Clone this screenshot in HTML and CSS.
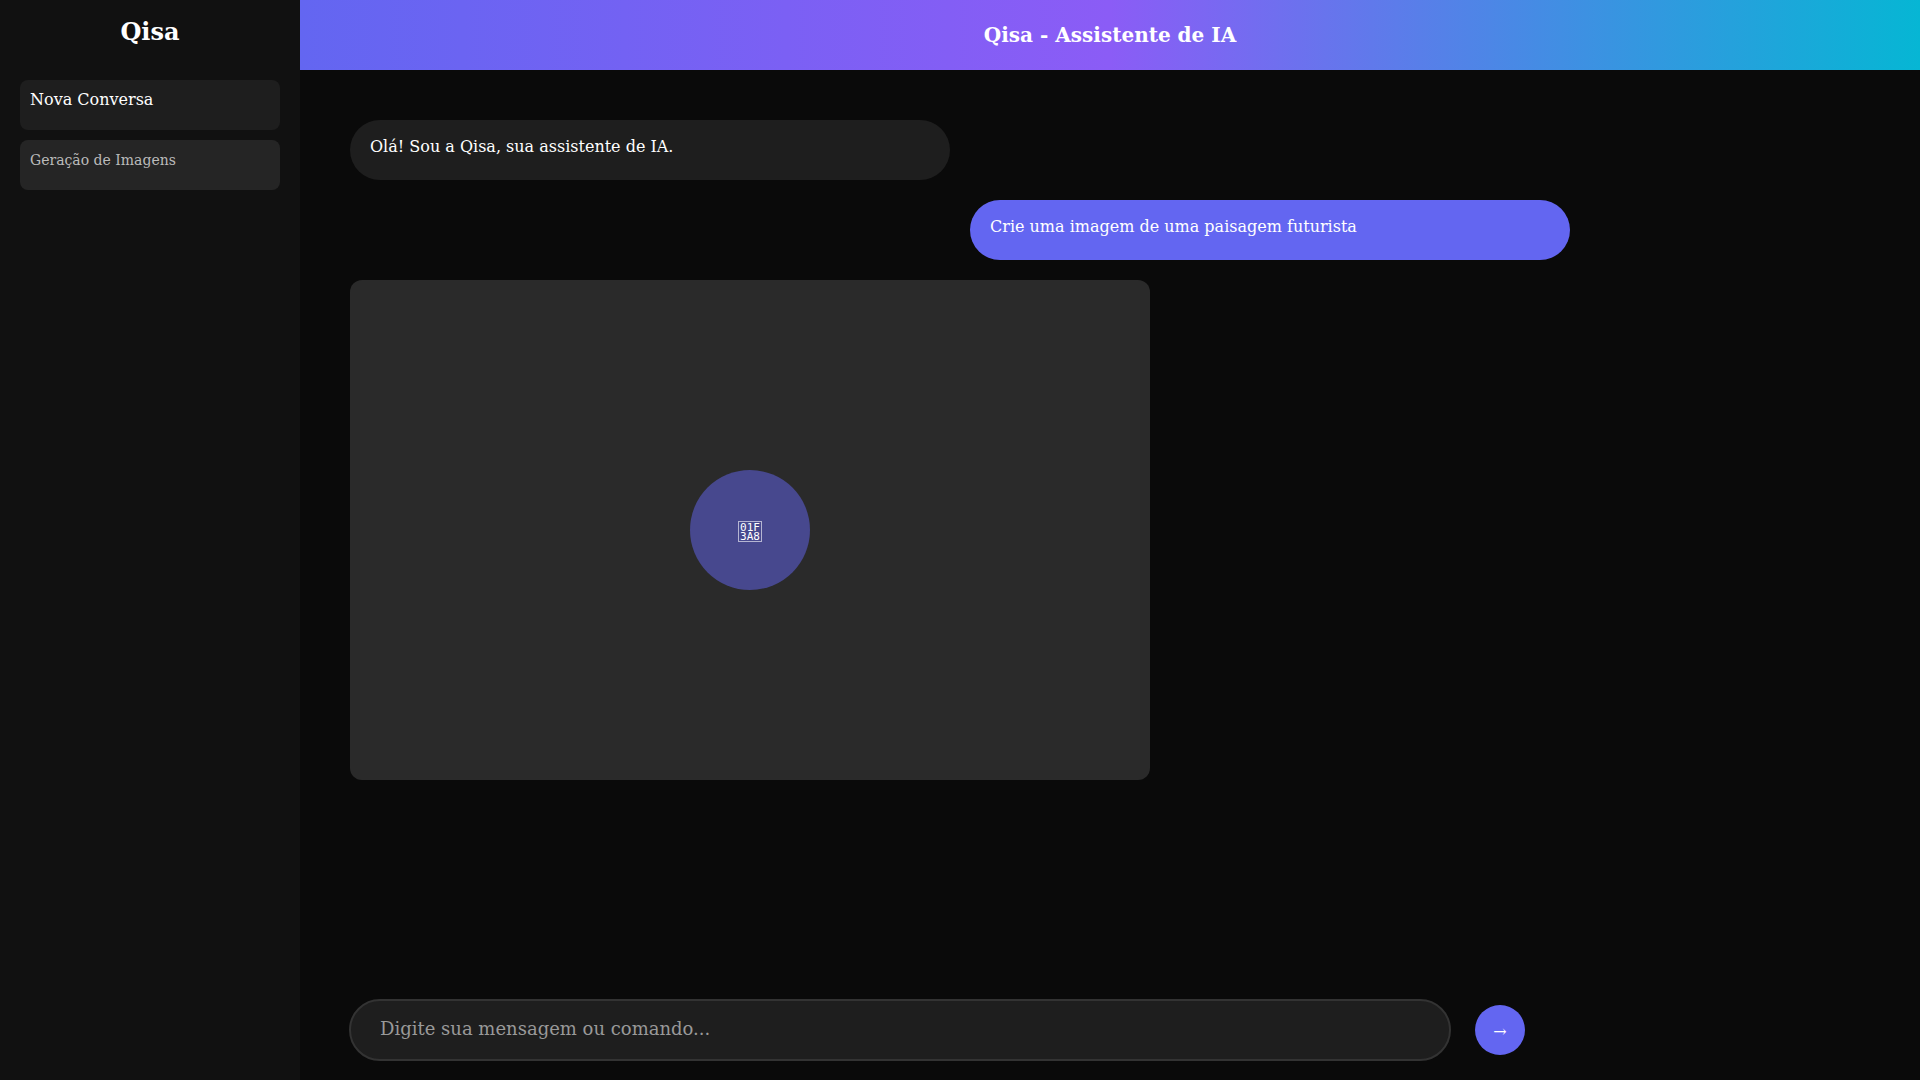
FILE: index.html
```html
<!DOCTYPE html>
<html lang="pt-BR">
<head>
<meta charset="utf-8">
<meta name="viewport" content="width=device-width, initial-scale=1">
<title>Qisa - Assistente de IA</title>
<link rel="stylesheet" href="styles.css">
</head>
<body>
<div class="app">
  <aside class="sidebar">
    <h2 class="brand">Qisa</h2>
    <nav class="menu">
      <button type="button" class="menu-item">Nova Conversa</button>
      <button type="button" class="menu-item menu-item-muted">Geração de Imagens</button>
    </nav>
  </aside>
  <div class="content">
    <header class="topbar">
      <h1 class="title">Qisa - Assistente de IA</h1>
    </header>
    <main class="messages">
      <p class="bubble">Olá! Sou a Qisa, sua assistente de IA.</p>
      <p class="bubble bubble-user">Crie uma imagem de uma paisagem futurista</p>
      <div class="artwork">
        <div class="artwork-icon">
          <span class="codepoint">01F<br>3A8</span>
        </div>
      </div>
    </main>
    <form class="composer">
      <input class="composer-input" type="text" aria-label="Mensagem" placeholder="Digite sua mensagem ou comando...">
      <button class="composer-send" type="button" aria-label="Enviar">→</button>
    </form>
  </div>
</div>
</body>
</html>
```
FILE: styles.css
```css
* {
  box-sizing: border-box;
}

body {
  margin: 0;
  background: #0a0a0a;
  color: #fff;
  font: 16px/24px "DejaVu Serif", serif;
}

button,
input {
  font-family: inherit;
}

.app {
  display: flex;
  min-height: 100vh;
}

.sidebar {
  flex: 0 0 300px;
  padding: 18px 20px;
  background: #111;
}

.brand {
  margin: 0 0 34px;
  font-size: 24px;
  line-height: 28px;
  text-align: center;
}

.menu {
  display: flex;
  flex-direction: column;
  gap: 10px;
}

.menu-item {
  display: flex;
  align-items: flex-start;
  min-height: 50px;
  padding: 10px;
  border: 0;
  border-radius: 8px;
  background: #1e1e1e;
  color: #fff;
  font-size: 16px;
  line-height: 20px;
  text-align: left;
  cursor: pointer;
}

.menu-item-muted {
  background: #252525;
  color: #bbb;
  font-size: 14px;
}

.content {
  display: flex;
  flex: 1;
  flex-direction: column;
  min-width: 0;
}

.topbar {
  display: flex;
  align-items: center;
  justify-content: center;
  min-height: 70px;
  background: linear-gradient(90deg, #6366f1, #8b5cf6 50%, #06b6d4);
}

.title {
  margin: 0;
  font-size: 20px;
  line-height: 24px;
}

.messages {
  display: flex;
  flex: 1;
  flex-direction: column;
  gap: 20px;
  width: 100%;
  max-width: 1320px;
  padding: 50px;
}

.bubble {
  width: 100%;
  max-width: 600px;
  min-height: 60px;
  margin: 0;
  padding: 15px 20px;
  border-radius: 30px;
  background: #1e1e1e;
}

.bubble-user {
  align-self: flex-end;
  background: #6366f1;
}

.artwork {
  display: flex;
  align-items: center;
  justify-content: center;
  width: 100%;
  max-width: 800px;
  aspect-ratio: 8 / 5;
  border-radius: 12px;
  background: #2a2a2a;
}

.artwork-icon {
  display: flex;
  align-items: center;
  justify-content: center;
  width: 120px;
  height: 120px;
  padding-top: 3px;
  border-radius: 50%;
  background: rgb(99 102 241 / 0.5);
}

/* Hex code of the palette symbol, boxed on two lines */
.codepoint {
  padding: 1px 1px 0;
  border: 1px solid rgb(255 255 255 / 0.6);
  font: 11px/9px "DejaVu Sans Mono", monospace;
}

.composer {
  display: flex;
  align-items: center;
  gap: 24px;
  width: 100%;
  max-width: 1274px;
  padding: 0 49px 19px;
}

.composer-input {
  flex: 1;
  min-width: 0;
  height: 62px;
  padding: 0 29px 4px;
  border: 2px solid #333;
  border-radius: 31px;
  background: #1e1e1e;
  color: #fff;
  font-size: 18px;
}

.composer-input::placeholder {
  color: #999;
}

.composer-send {
  flex: 0 0 50px;
  height: 50px;
  padding: 2px 0 0;
  border: 0;
  border-radius: 50%;
  background: #6366f1;
  color: #fff;
  font-size: 16px;
  cursor: pointer;
}
```
